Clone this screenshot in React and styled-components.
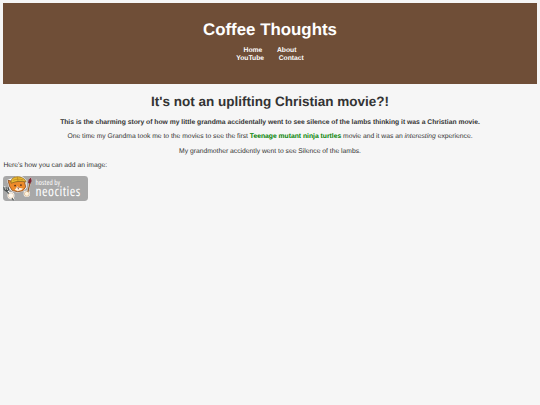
import React from "react"
import styled, { createGlobalStyle } from "styled-components"

export default function App() {
  const menuRows = [
    ["Home", "About"],
    ["YouTube", "Contact"],
  ]
  return (
    <>
      <GlobalStyle />
      <Header>
        <SiteTitle>Coffee Thoughts</SiteTitle>
        <nav>
          {menuRows.map((row, index) => (
            <MenuRow key={index}>
              {row.map(title => (
                <MenuLink href="#" key={title}>
                  {title}
                </MenuLink>
              ))}
            </MenuRow>
          ))}
        </nav>
      </Header>
      <main>
        <StoryTitle>It's not an uplifting Christian movie?!</StoryTitle>
        <Paragraph $center>
          <strong>
            This is the charming story of how my little grandma accidentally
            went to see silence of the lambs thinking it was a Christian movie.
          </strong>
        </Paragraph>
        <Paragraph $center>
          One time my Grandma took me to the movies to see the first{" "}
          <Turtles>Teenage mutant ninja turtles</Turtles> movie and it was an{" "}
          <em>interesting</em> experience.
        </Paragraph>
        <Paragraph $center>
          My grandmother accidently went to see Silence of the lambs.
        </Paragraph>
        <Paragraph>Here's how you can add an image:</Paragraph>
        <NeocitiesBadge />
      </main>
    </>
  )
}

function NeocitiesBadge() {
  return (
    <Badge>
      <Mascot />
      <BadgeText>
        <HostedBy>hosted by</HostedBy>
        <BadgeName>neocities</BadgeName>
      </BadgeText>
    </Badge>
  )
}

function Mascot() {
  return (
    <MascotSvg viewBox="0 0 31 25.3" aria-hidden="true">
      {/* white sticker outline */}
      <g
        fill="#fff"
        stroke="#fff"
        strokeWidth="1.8"
        strokeLinejoin="round"
        strokeLinecap="round"
      >
        <path d="M7 12.5 4.8 4.6 8.5 3.5 13 1.2 19 1.2 22.8 5 23 11.5 20 15 14.5 16 9.5 15Z" />
        <path d="M1.5 11.5 8 20 10.5 24M28 2.5 25 17" />
        <circle cx="7.8" cy="20" r="2.7" />
        <circle cx="24" cy="18.2" r="2.4" />
      </g>
      {/* fork */}
      <path
        d="M.6 11.2 1 14l2.4 1.5 2-1.4-.4-2.5M2.6 11.4l.8 4 3 3.4M8.8 22.5l1.8 2.4"
        fill="none"
        stroke="#4b5050"
        strokeWidth="1.2"
      />
      {/* brush */}
      <path d="M27.2 7 25 16.5" stroke="#94602f" strokeWidth="1.4" />
      <path d="m28.4 1.2.5 3.8-1.3 3-2.3-.8.6-3.4Z" fill="#7c2431" />
      {/* cat with a hard hat */}
      <path
        d="M4.8 4.4 9 5.4l12.6 0 1.2 5.8-2.8 3.9-5.4 1-5.4-1.2-2.8-4.3Z"
        fill="#ed8b2b"
        stroke="#7d4319"
        strokeWidth=".8"
      />
      <path
        d="M11.6 14c1.2-1 1.8-2 2.6-3.6 1 1.6 3.2 2 5.8 2.2l-1.4 1.8-3.8.8Z"
        fill="#fff0dc"
      />
      <path
        d="M8 7.4c-.8-3.8 1.8-6.3 6-6.6 4.2-.2 8.2 1.8 9.2 5.4-4.8-1.4-9.6-1-15.2 1.2Z"
        fill="#ecbb32"
        stroke="#8f681f"
        strokeWidth=".8"
      />
      <path
        d="M10 4.4c3.3-1.5 6.7-1.5 10.4-.4M14.4 1.2l.6 4"
        fill="none"
        stroke="#a97a1c"
        strokeWidth=".6"
      />
      <circle cx="12" cy="9.8" r=".9" fill="#4a2b1e" />
      <circle cx="18" cy="9.2" r=".9" fill="#4a2b1e" />
      <path
        d="m14.3 11.8 1 .6 1-.7m-1 .7.1 1.2"
        fill="none"
        stroke="#6b3025"
        strokeWidth=".7"
      />
      {/* paws */}
      <circle cx="7.8" cy="20" r="2.8" fill="#fff8ee" stroke="#c09b72" strokeWidth=".4" />
      <circle cx="24" cy="18.2" r="2.5" fill="#fff2dc" stroke="#b78a54" strokeWidth=".5" />
    </MascotSvg>
  )
}

const GlobalStyle = createGlobalStyle`
  body {
    margin: 3.375px;
    background-color: #f6f6f6;
    color: #333;
    font-family: "Liberation Sans", Arial, sans-serif;
    font-size: 6.75px;
    line-height: 7.8px;
    text-rendering: geometricPrecision;
  }
`

const Header = styled.header`
  box-sizing: border-box;
  height: 81px;
  padding-top: 16.6px;
  background-color: #6f4e37;
  color: #fff;
  text-align: center;
`

const SiteTitle = styled.h1`
  margin: 0 0 7.5px;
  font-size: 16.875px;
  line-height: 19.4px;
`

const MenuRow = styled.div`
  display: flex;
  justify-content: center;
  gap: 14.6px;
`

const MenuLink = styled.a`
  color: #fff;
  font-weight: bold;
  text-decoration: none;
`

const StoryTitle = styled.h2`
  margin: 9.8px 0 9.3px;
  font-size: 13.5px;
  line-height: 15.6px;
  text-align: center;
`

const Paragraph = styled.p`
  margin: 0 0 6.5px;
  text-align: ${({ $center }) => ($center ? "center" : "left")};
`

const Turtles = styled.strong`
  color: green;
`

const Badge = styled.div`
  display: flex;
  width: 84.4px;
  height: 24.8px;
  border-radius: 3.4px;
  background-color: #a8a8a8;
  color: #fff;
`

const MascotSvg = styled.svg`
  flex: none;
  width: 31px;
  height: 24.8px;
`

const BadgeText = styled.div`
  display: flex;
  flex-direction: column;
  padding: 3.6px 0 0 1.2px;
  font-family: "Open Sans", "Noto Sans", sans-serif;
  font-stretch: condensed;
  white-space: nowrap;
`

const HostedBy = styled.span`
  font-size: 7.1px;
  letter-spacing: 0.1px;
  line-height: 7px;
`

const BadgeName = styled.span`
  font-size: 13.4px;
  font-weight: 500;
  letter-spacing: 0.45px;
  line-height: 9px;
`
